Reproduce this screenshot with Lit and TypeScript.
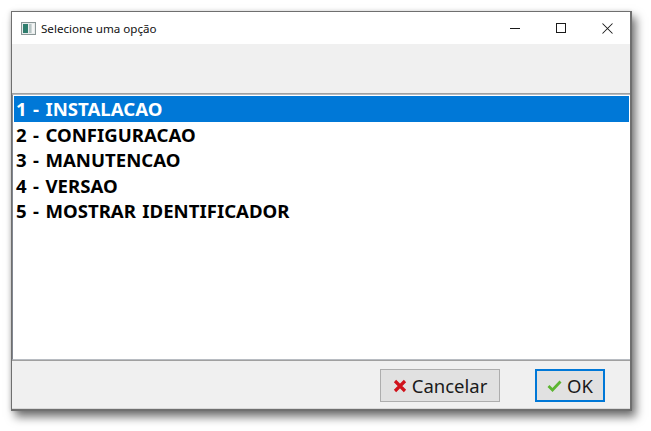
import { LitElement, html, css } from "lit";
import { customElement } from "lit/decorators.js";

@customElement("app-root")
export class AppRoot extends LitElement {
  static styles = css`
    :host { display: block; width: 651px; height: 431px; background: #fff; overflow: hidden; box-sizing: border-box; padding: 11px 0 0 11px; font-family: "Noto Sans", "Open Sans", sans-serif; }
    .win { width: 621px; height: 400px; box-sizing: border-box; border: 1px solid #6f6f6f; border-width: 1px 2px 2px 1px; background: #f0f0f0; display: flex; flex-direction: column; box-shadow: 4px 6px 9px rgba(0,0,0,.55), -1px 0 4px rgba(0,0,0,.12); }
    .title { height: 32px; background: #fff; display: flex; align-items: center; padding-left: 9px; flex: none; }
    .app { width: 15px; height: 15px; display: block; margin-right: 5px; }
    .title span { font-size: 11.6px; color: #111; flex: 1; }
    .ctl { width: 46px; height: 32px; display: flex; align-items: center; justify-content: center; }
    .ctl svg { display: block; }
    .tool { height: 50px; box-sizing: border-box; flex: none; background: #f0f0f0; border-bottom: 1px solid #a0a0a0; }
    .list { flex: 1; background: #fff; border: 1px solid #b8bcc2; border-width: 1px 0 1px 1px; padding: 1px 1px 1px 1px; min-height: 0; border-left-color: #828790; }
    .item { height: 25.5px; line-height: 25.4px; font-size: 18.6px; font-weight: 700; word-spacing: 1.6px; color: #000; padding-left: 2px; white-space: nowrap; }
    .item.sel { background: #0078d7; color: #fff; }
    .foot { height: 49px; flex: none; border-top: 1px solid #a0a0a0; border-bottom: 1px solid #d8d8d8; box-sizing: border-box; display: flex; align-items: center; justify-content: flex-end; padding: 2px 25px 0 0; gap: 35px; background: #f0f0f0; }
    .btn { box-sizing: border-box; height: 33px; display: flex; align-items: center; justify-content: center; gap: 5px; background: #e1e1e1; border: 1px solid #adadad; font-family: inherit; font-size: 18.5px; color: #1a1a1a; padding: 0; }
    .btn.c { width: 120px; }
    .btn.o { width: 70px; border: 2px solid #0078d7; }
    .btn svg { display: block; }
  `;
  render() {
    const items = ["1 - INSTALACAO", "2 - CONFIGURACAO", "3 - MANUTENCAO", "4 - VERSAO", "5 - MOSTRAR IDENTIFICADOR"];
    return html`<div class="win">
      <div class="title">
        <svg class="app" viewBox="0 0 15 15"><rect x=".5" y="1.5" width="14" height="12" fill="#e8ecec" stroke="#8a9696"/><rect x="2" y="3" width="5" height="9" fill="#2f7d6d"/><rect x="8" y="3" width="2.5" height="9" fill="#b9c6c6"/><rect x="11" y="3" width="2" height="9" fill="#f4f6f6"/></svg>
        <span>Selecione uma opção</span>
        <div class="ctl"><svg width="10" height="10" viewBox="0 0 10 10"><path d="M0 5.5H10" stroke="#1a1a1a"/></svg></div>
        <div class="ctl"><svg width="10" height="10" viewBox="0 0 10 10"><rect x=".5" y=".5" width="9" height="9" fill="none" stroke="#1a1a1a"/></svg></div>
        <div class="ctl"><svg width="11" height="11" viewBox="0 0 11 11"><path d="M.5 .5L10.5 10.5M10.5 .5L.5 10.5" stroke="#1a1a1a" stroke-width="1.05"/></svg></div>
      </div>
      <div class="tool"></div>
      <div class="list">${items.map((t, i) => html`<div class="item ${i === 0 ? "sel" : ""}">${t}</div>`)}</div>
      <div class="foot">
        <button class="btn c"><svg width="14" height="14" viewBox="0 0 14 14"><path d="M2 2L12 12M12 2L2 12" stroke="#d0121b" stroke-width="3.2"/></svg>Cancelar</button>
        <button class="btn o"><svg width="15" height="13" viewBox="0 0 15 13"><path d="M1.5 7L5.5 11L13.5 2.5" fill="none" stroke="#5cb531" stroke-width="2.8"/></svg>OK</button>
      </div>
    </div>`;
  }
}
